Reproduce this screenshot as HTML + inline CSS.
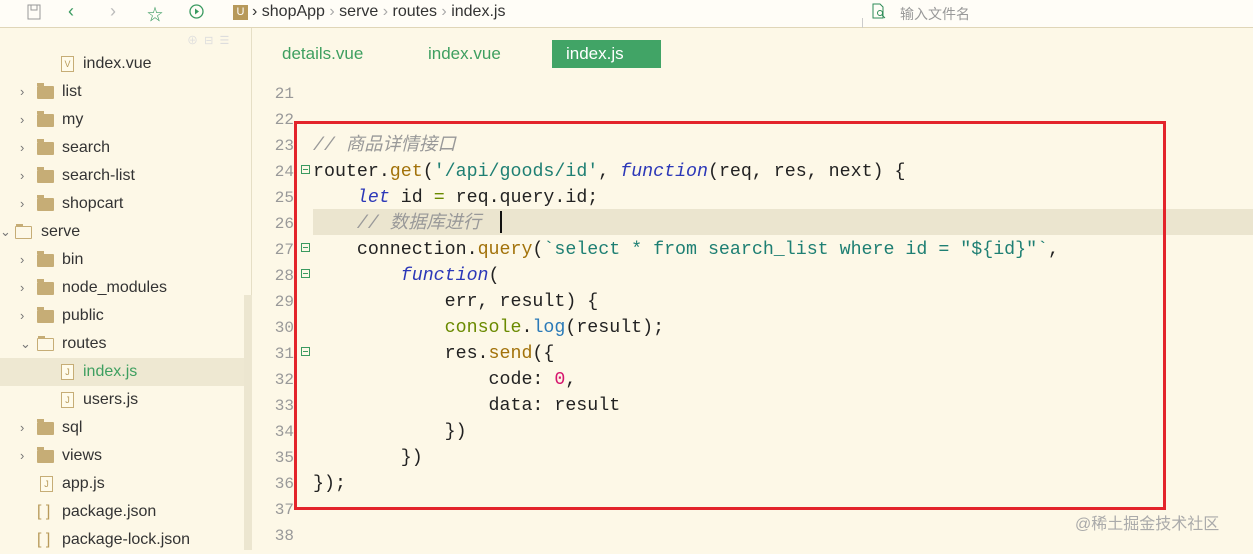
<!DOCTYPE html>
<html><head><meta charset="utf-8"><style>
*{margin:0;padding:0;box-sizing:border-box}
body{width:1253px;height:550px;overflow:hidden;background:#fdf8e7;font-family:"Liberation Sans","Noto Sans CJK SC",sans-serif;position:relative}
.top{position:absolute;left:0;top:0;width:1253px;height:28px;background:#fffdf7;border-bottom:1px solid #e0d6b8}
.abs{position:absolute}
.side{position:absolute;left:0;top:28px;width:252px;height:522px;border-right:1px solid #e6dfc6}
.row{position:absolute;height:28px;line-height:28px;font-size:16px;color:#333;white-space:nowrap}
.arr{position:absolute;left:20px;font-size:13px;color:#777}
.fold{position:absolute;left:37px;top:8px;width:17px;height:13px;background:#c6ad76;border-radius:1px}
.fold:before{content:"";position:absolute;left:0;top:-3px;width:7px;height:3px;background:#c6ad76}
.file{position:absolute;width:13px;height:16px;border:1px solid #c6ad76;top:6px;font-size:9px;line-height:14px;text-align:center;color:#b89a5a;background:#fffbea}
.tab{position:absolute;top:40px;height:28px;line-height:28px;font-size:17px;color:#3e9f60}
.ln{position:absolute;left:258px;width:36px;text-align:right;font-family:"Liberation Mono",monospace;font-size:16px;color:#999}
.code{position:absolute;left:313px;font-family:"Liberation Mono","Noto Sans CJK SC",monospace;font-size:18.3px;color:#222;white-space:pre;line-height:26px}
.cm{color:#999;font-style:italic}.kw{color:#2c38b8;font-style:italic}.fn{color:#a2720a}.st{color:#1e7f73}.nm{color:#d6166e}.op{color:#6a8a00}
.box{position:absolute;left:294px;top:121px;width:872px;height:389px;border:3px solid #e3242b}
.fbtn{position:absolute;left:301px;width:9px;height:9px;border:1px solid #3a9a60}
.fbtn:after{content:"";position:absolute;left:1px;top:3px;width:5px;height:1px;background:#3a9a60}
</style></head><body>
<div class="top">
 <svg class="abs" style="left:27px;top:4px" width="14" height="16" viewBox="0 0 14 16"><path d="M1 1h12v14H1z M4 1v5h6V1" fill="none" stroke="#999"/></svg>
 <div class="abs" style="left:68px;top:1px;color:#3a9a60;font-size:18px">&#8249;</div>
 <div class="abs" style="left:110px;top:1px;color:#bbb;font-size:18px">&#8250;</div>
 <div class="abs" style="left:147px;top:1px;color:#3a9a60;font-size:16px">&#9734;</div>
 <svg class="abs" style="left:189px;top:4px" width="15" height="15"><circle cx="7.5" cy="7.5" r="6.5" fill="none" stroke="#3a9a60" stroke-width="1.3"/><path d="M6 4.5l4 3-4 3z" fill="#3a9a60"/></svg>
 <div class="abs" style="left:233px;top:5px;width:15px;height:15px;background:#b7995a;color:#fff;font-size:11px;text-align:center;line-height:15px">U</div>
 <div class="abs" style="left:252px;top:3px;font-size:16px;color:#333;white-space:nowrap">› shopApp <span style="color:#aaa">›</span> serve <span style="color:#aaa">›</span> routes <span style="color:#aaa">›</span> index.js</div>
 <div class="abs" style="left:862px;top:18px;width:1px;height:10px;background:#ccc"></div>
 <svg class="abs" style="left:871px;top:3px" width="16" height="16"><path d="M2 1h7l3 3v11H2z" fill="none" stroke="#2e8b57"/><circle cx="9" cy="10" r="2.5" fill="none" stroke="#2e8b57"/><path d="M11 12l3 3" stroke="#2e8b57"/></svg>
 <div class="abs" style="left:900px;top:4px;font-size:14px;color:#999">输入文件名</div>
</div>
<div class="side">
 <div class="abs" style="left:187px;top:4px;font-size:11px;color:#ddd">⊕ &nbsp;⊟ &nbsp;☰</div>
 <div class="abs" style="left:244px;top:267px;width:8px;height:255px;background:#ece6d0"></div>
 <div class="abs" style="left:0;top:330px;width:244px;height:28px;background:#eee8d2"></div>
 <div class="row" style="top:22px;left:0"><span class="file" style="left:61px">V</span><span style="position:absolute;left:83px">index.vue</span></div>
 <div class="row" style="top:50px"><span class="arr">›</span><span class="fold"></span><span style="position:absolute;left:62px">list</span></div>
 <div class="row" style="top:78px"><span class="arr">›</span><span class="fold"></span><span style="position:absolute;left:62px">my</span></div>
 <div class="row" style="top:106px"><span class="arr">›</span><span class="fold"></span><span style="position:absolute;left:62px">search</span></div>
 <div class="row" style="top:134px"><span class="arr">›</span><span class="fold"></span><span style="position:absolute;left:62px">search-list</span></div>
 <div class="row" style="top:162px"><span class="arr">›</span><span class="fold"></span><span style="position:absolute;left:62px">shopcart</span></div>
 <div class="row" style="top:190px"><span class="arr" style="left:0">⌄</span><span class="fold" style="left:15px;background:none;border:1.5px solid #c6ad76"></span><span style="position:absolute;left:41px">serve</span></div>
 <div class="row" style="top:218px"><span class="arr">›</span><span class="fold"></span><span style="position:absolute;left:62px">bin</span></div>
 <div class="row" style="top:246px"><span class="arr">›</span><span class="fold"></span><span style="position:absolute;left:62px">node_modules</span></div>
 <div class="row" style="top:274px"><span class="arr">›</span><span class="fold"></span><span style="position:absolute;left:62px">public</span></div>
 <div class="row" style="top:302px"><span class="arr">⌄</span><span class="fold" style="background:none;border:1.5px solid #c6ad76"></span><span style="position:absolute;left:62px">routes</span></div>
 <div class="row" style="top:330px"><span class="file" style="left:61px">J</span><span style="position:absolute;left:83px;color:#3e9f60">index.js</span></div>
 <div class="row" style="top:358px"><span class="file" style="left:61px">J</span><span style="position:absolute;left:83px">users.js</span></div>
 <div class="row" style="top:386px"><span class="arr">›</span><span class="fold"></span><span style="position:absolute;left:62px">sql</span></div>
 <div class="row" style="top:414px"><span class="arr">›</span><span class="fold"></span><span style="position:absolute;left:62px">views</span></div>
 <div class="row" style="top:442px"><span class="file" style="left:40px">J</span><span style="position:absolute;left:62px">app.js</span></div>
 <div class="row" style="top:470px"><span style="position:absolute;left:37px;color:#b89a5a">[ ]</span><span style="position:absolute;left:62px">package.json</span></div>
 <div class="row" style="top:498px"><span style="position:absolute;left:37px;color:#b89a5a">[ ]</span><span style="position:absolute;left:62px">package-lock.json</span></div>
</div>
<div class="tab" style="left:282px">details.vue</div>
<div class="tab" style="left:428px">index.vue</div>
<div class="tab" style="left:552px;width:109px;background:#41a466;color:#fff;padding-left:14px">index.js</div>
<div class="abs" style="left:313px;top:209px;width:940px;height:26px;background:#ebe5cf"></div>
<div class="abs" style="left:500px;top:211px;width:2px;height:22px;background:#111"></div>
<div class="ln" style="top:81px;line-height:26px">21<br>22<br>23<br>24<br>25<br>26<br>27<br>28<br>29<br>30<br>31<br>32<br>33<br>34<br>35<br>36<br>37<br>38</div>
<div class="fbtn" style="top:165px"></div><div class="fbtn" style="top:243px"></div><div class="fbtn" style="top:269px"></div><div class="fbtn" style="top:347px"></div>
<div class="code" style="top:133px"><span class="cm">// 商品详情接口</span>
router.<span class="fn">get</span>(<span class="st">'/api/goods/id'</span>, <span class="kw">function</span>(req, res, next) {
    <span class="kw">let</span> id <span class="op">=</span> req.query.id;
    <span class="cm">// 数据库进行</span>
    connection.<span class="fn">query</span>(<span class="st">`select * from search_list where id = "${id}"`</span>,
        <span class="kw">function</span>(
            err, result) {
            <span class="op">console</span>.<span class="fn" style="color:#2a7ab8">log</span>(result);
            res.<span class="fn">send</span>({
                code: <span class="nm">0</span>,
                data: result
            })
        })
});</div>
<div class="box"></div>
<div class="abs" style="left:1075px;top:510px;font-size:16px;color:#aaa">@稀土掘金技术社区</div>
</body></html>
